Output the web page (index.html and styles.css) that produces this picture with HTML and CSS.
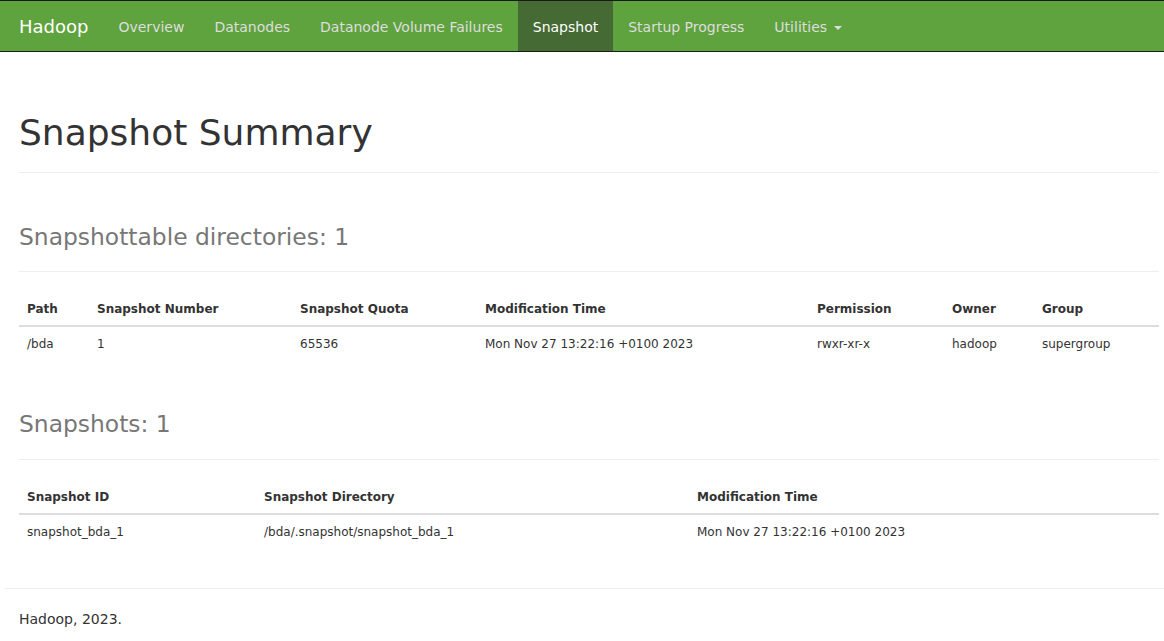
FILE: index.html
```html
<!DOCTYPE html>
<html>
<head>
<meta charset="utf-8">
<title>Snapshot Summary</title>
<link rel="stylesheet" href="styles.css">
</head>
<body>
<header class="navbar">
  <div class="container nav-inner">
    <a class="brand" href="#">Hadoop</a>
    <ul class="nav">
      <li><a href="#">Overview</a></li>
      <li><a href="#">Datanodes</a></li>
      <li><a href="#">Datanode Volume Failures</a></li>
      <li class="active"><a href="#">Snapshot</a></li>
      <li><a href="#">Startup Progress</a></li>
      <li><a href="#">Utilities <span class="caret"></span></a></li>
    </ul>
  </div>
</header>

<main class="container">
  <div class="page-header">
    <h1>Snapshot Summary</h1>
  </div>

  <div class="page-header">
    <h1><small>Snapshottable directories: 1</small></h1>
  </div>
  <table class="table t1">
    <thead>
      <tr>
        <th class="c1">Path</th>
        <th class="c2">Snapshot Number</th>
        <th class="c3">Snapshot Quota</th>
        <th class="c4">Modification Time</th>
        <th class="c5">Permission</th>
        <th class="c6">Owner</th>
        <th class="c7">Group</th>
      </tr>
    </thead>
    <tbody>
      <tr>
        <td>/bda</td>
        <td>1</td>
        <td>65536</td>
        <td>Mon Nov 27 13:22:16 +0100 2023</td>
        <td>rwxr-xr-x</td>
        <td>hadoop</td>
        <td>supergroup</td>
      </tr>
    </tbody>
  </table>

  <div class="page-header">
    <h1><small>Snapshots: 1</small></h1>
  </div>
  <table class="table t2">
    <thead>
      <tr>
        <th class="d1">Snapshot ID</th>
        <th class="d2">Snapshot Directory</th>
        <th class="d3">Modification Time</th>
      </tr>
    </thead>
    <tbody>
      <tr>
        <td>snapshot_bda_1</td>
        <td>/bda/.snapshot/snapshot_bda_1</td>
        <td>Mon Nov 27 13:22:16 +0100 2023</td>
      </tr>
    </tbody>
  </table>

  <div class="row">
    <hr>
    <p class="footer-text">Hadoop, 2023.</p>
  </div>
</main>
</body>
</html>
```

FILE: styles.css
```css
html, body {
  margin: 0;
  padding: 0;
  overflow-x: hidden;
}
body {
  font-family: "DejaVu Sans", "Liberation Sans", sans-serif;
  font-size: 14px;
  line-height: 1.42857143;
  color: #333;
  background: #fff;
}
* { box-sizing: border-box; }

.container {
  width: 1170px;
  margin-left: 4px;
  padding: 0 15px;
}

/* navbar */
.navbar {
  background-color: #5fa33e;
  border-top: 1px solid #1a1a1a;
  border-bottom: 1px solid #1a1a1a;
  min-height: 52px;
  margin-bottom: 21px;
}
.nav-inner {
  display: flex;
  align-items: stretch;
  height: 50px;
}
.brand {
  display: block;
  font-size: 18px;
  line-height: 20px;
  padding: 16px 15px 14px 0;
  color: #fff;
  text-decoration: none;
}
.nav {
  list-style: none;
  margin: 0;
  padding: 0;
  display: flex;
}
.nav li a {
  display: block;
  padding: 16px 15px 14px;
  line-height: 20px;
  color: #ddd;
  text-decoration: none;
}
.nav li.active a {
  background-color: #456a33;
  color: #fff;
}
.caret {
  display: inline-block;
  width: 0;
  height: 0;
  margin-left: 2px;
  vertical-align: middle;
  border-top: 4px solid;
  border-right: 4px solid transparent;
  border-left: 4px solid transparent;
}

/* headings */
.page-header {
  padding-bottom: 9px;
  margin: 40px 0 20px;
  border-bottom: 1px solid #eee;
}
main > .page-header:first-child {
  margin-top: 0;
  padding-top: 40px;
}
h1 {
  font-family: inherit;
  font-weight: 500;
  font-size: 36px;
  line-height: 1.1;
  color: inherit;
  margin: 20px 0 10px;
}
.page-header h1 { margin-top: 0; }
h1 small {
  font-size: 65%;
  font-weight: 400;
  line-height: 1;
  color: #777;
}

/* tables */
.table {
  width: 100%;
  border-collapse: collapse;
  border-spacing: 0;
  margin-bottom: 20px;
  font-size: 12px;
}
.table th, .table td {
  line-height: 1.42857143;
  text-align: left;
  vertical-align: top;
}
.table th {
  padding: 9px 8px 7px;
  font-weight: bold;
  vertical-align: bottom;
  border-bottom: 2px solid #ddd;
}
.table td {
  padding: 9px 8px 7px;
  border-top: 1px solid #ddd;
}
.c1 { width: 70px; }
.c2 { width: 203px; }
.c3 { width: 185px; }
.c4 { width: 332px; }
.c5 { width: 135px; }
.c6 { width: 90px; }
.c7 { width: 125px; }
.d1 { width: 237px; }
.d2 { width: 433px; }
.d3 { width: 470px; }

/* footer */
.row {
  display: flow-root;
  margin: 0 -15px;
}
.row hr {
  margin: 20px 0;
  border: 0;
  border-top: 1px solid #eee;
  height: 0;
}
.footer-text {
  margin: 0 0 10px;
  padding: 0 15px;
}
```
